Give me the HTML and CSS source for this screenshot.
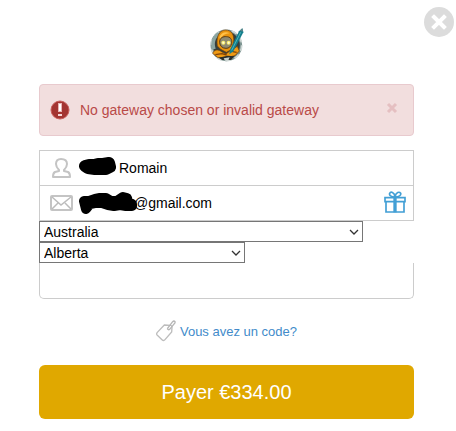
FILE: index.html
```html
<!DOCTYPE html>
<html lang="fr">
    <head>
        <meta charset="utf-8">
        <title>Paiement</title>
        <meta name="viewport" content="width=device-width, initial-scale=1">
        <link rel="stylesheet" href="styles.css">
    </head>

    <body>
        <button type="button" class="close-btn" aria-label="Fermer">
            <svg width="30" height="30" viewBox="0 0 30 30">
                <circle cx="15" cy="15" r="15" fill="#dcdcdc"/>
                <path d="M10 10L20 20M20 10L10 20" stroke="#fff" stroke-width="4" stroke-linecap="square"/>
            </svg>
        </button>

        <main class="checkout">
            <svg class="logo" width="35" height="35" viewBox="39 33 105 105">
                <circle cx="91" cy="88" r="44" fill="#34403f" stroke="#7d9491" stroke-width="7"/>
                <circle cx="91" cy="88" r="46" fill="none" stroke="#d0d8d6" stroke-width="5" stroke-dasharray="17 12"/>
                <path d="M47 101C43 76 51 58 65 49L70 58C57 68 54 82 59 98Z" fill="#8ba5a1"/>
                <path d="M64 90C60 65 68 43 88 42C107 42 115 57 113 77L108 100L91 109L74 100Z" fill="#e8930e" stroke="#6b3d0a" stroke-width="2"/>
                <path d="M70 64C74 50 90 45 101 52C88 53 79 57 75 69Z" fill="#ffc14a"/>
                <path d="M71 80C70 65 82 61 91 62C103 62 109 70 107 82C105 92 99 97 90 97C79 97 72 90 71 80Z" fill="#8f8a70" stroke="#5c3c12" stroke-width="3"/>
                <circle cx="82" cy="80" r="6" fill="#f7ec6a"/>
                <circle cx="98" cy="80" r="6" fill="#f7ec6a"/>
                <circle cx="82" cy="80" r="3" fill="#fffde0"/>
                <circle cx="98" cy="80" r="3" fill="#fffde0"/>
                <path d="M50 112C55 99 68 99 78 108L90 114L103 104L124 91L130 105L117 119L95 124L66 125Z" fill="#ef9a14" stroke="#6b3d0a" stroke-width="2"/>
                <path d="M58 116L78 113L92 117M110 107L122 109" fill="none" stroke="#824309" stroke-width="4"/>
                <path d="M68 125L94 119L115 121L105 132L79 132Z" fill="#2a2e2b"/>
                <path d="M83 127L101 124L97 133L86 133Z" fill="#c6cfcc"/>
                <path d="M139 37L142 49L112 106L100 115L102 101L129 46Z" fill="#147f8d"/>
                <path d="M134 49L107 103" stroke="#4fb5bb" stroke-width="3"/>
                <path d="M139 37L142 47L131 44Z" fill="#5c8588"/>
            </svg>

            <div class="alert" role="alert">
                <svg class="alert-icon" width="20" height="20" viewBox="0 0 20 20">
                    <circle cx="10" cy="10" r="9" fill="#a43532" stroke="#c9605d"/>
                    <path d="M8 3H12V12H8Z" fill="#e9b4b4"/>
                    <path d="M9 4H11V11H9Z" fill="#fff"/>
                    <path d="M8 14H12V16H8Z" fill="#f6d7d7"/>
                </svg>
                <span class="alert-text">No gateway chosen or invalid gateway</span>
                <button type="button" class="alert-close" aria-label="Masquer le message">
                    <svg width="12" height="12" viewBox="0 0 12 12">
                        <path d="M2 2L10 10M10 2L2 10" stroke="#e5bfc1" stroke-width="3"/>
                    </svg>
                </button>
            </div>

            <form class="payment-form">
                <div class="field">
                    <label class="field-icon" for="name" aria-label="Nom">
                        <svg width="24" height="22" viewBox="0 0 24 22">
                            <path d="M9 13C7 11 6 9 6 7C6 3 8 2 11 2C15 2 17 3 17 7C17 9 16 11 14 13V14L18 15C20 16 20 18 20 20H3C3 18 3 16 5 15L9 14Z" fill="none" stroke="#c4c4c4" stroke-width="2" stroke-linejoin="round"/>
                        </svg>
                    </label>
                    <svg class="mask" width="38" height="24" viewBox="0 0 38 24">
                        <path d="M7 10L11 9L16 9L20 8L25 8L31 7L32 11L28 13L22 13L17 13L10 12Z" fill="#000" stroke="#000" stroke-width="12" stroke-linejoin="round"/>
                    </svg>
                    <input type="text" id="name" value="Romain">
                </div>
                <div class="field">
                    <label class="field-icon" for="email" aria-label="E-mail">
                        <svg width="24" height="22" viewBox="0 0 24 22">
                            <rect x="1" y="4" width="21" height="14" rx="1" fill="none" stroke="#c4c4c4" stroke-width="2"/>
                            <path d="M2 5L11 13L21 5M2 17L8 11M21 17L15 11" fill="none" stroke="#bcbcbc" stroke-width="1.5"/>
                        </svg>
                    </label>
                    <svg class="mask mask-email" width="60" height="24" viewBox="0 0 60 24">
                        <path d="M6 10L11 10L17 8L22 7L28 7L33 10L39 10L45 6L49 7L50 11L54 13L54 15L48 15L42 14L36 15L30 14L24 12L17 12L12 13L8 18Z" fill="#000" stroke="#000" stroke-width="10" stroke-linejoin="round"/>
                    </svg>
                    <input type="text" id="email" value="@gmail.com">
                    <svg class="gift" width="22" height="22" viewBox="0 0 66 66">
                        <path d="M3 20H63V32H3ZM6 32H60V63H6Z" fill="#fff" stroke="#429fd5" stroke-width="5"/>
                        <path d="M33 18C21 18 15 13 17 7C20 1 31 3 33 18C36 3 46 1 50 7C52 13 45 18 33 18Z" fill="#fff" stroke="#429fd5" stroke-width="5"/>
                        <path d="M28 18H38V64H28Z" fill="#429fd5"/>
                    </svg>
                </div>

                <div class="select-box country">
                    <select aria-label="Pays">
                        <option>Australia</option>
                    </select>
                    <svg class="chevron" width="10" height="6" viewBox="0 0 10 6">
                        <path d="M1 1L5 5L9 1" fill="none" stroke="#333" stroke-width="1.3"/>
                    </svg>
                </div>
                <div class="select-box state">
                    <select aria-label="Région">
                        <option>Alberta</option>
                    </select>
                    <svg class="chevron" width="10" height="6" viewBox="0 0 10 6">
                        <path d="M1 1L5 5L9 1" fill="none" stroke="#333" stroke-width="1.3"/>
                    </svg>
                </div>
                <div class="card-area"></div>

                <a class="code-link" href="#">
                    <svg width="20" height="22" viewBox="0 0 60 66">
                        <path d="M25 15L44 16Q48 16 48 22L47 36L27 59Q23 64 18 59L4 46Q0 42 4 37Z" fill="none" stroke="#bdbdbd" stroke-width="4"/>
                        <path d="M34 26L50 5Q54 1 57 5Q58 8 55 11L41 28Q37 31 34 26" fill="none" stroke="#b5b5b5" stroke-width="4"/>
                    </svg>
                    <span>Vous avez un code?</span>
                </a>

                <button type="submit" class="pay-btn">Payer €334.00</button>
            </form>
        </main>
    </body>
</html>
```
FILE: styles.css
```css
body {
    margin: 0;
    background-color: #fff;
    color: #000;
    font-family: "Liberation Sans", Arial, sans-serif;
    font-size: 14px;
}

svg {
    display: block;
    flex: none;
}

button {
    padding: 0;
    border: none;
    background: none;
    font-family: inherit;
    cursor: pointer;
}

.close-btn {
    position: absolute;
    top: 7px;
    right: 2px;
}

.checkout {
    padding: 27px 42px 12px 39px;
}

.logo {
    margin: 0 auto 22px;
}

/* error message */
.alert {
    display: flex;
    align-items: center;
    box-sizing: border-box;
    min-height: 52px;
    padding: 0 15px 0 10px;
    border: 1px solid #e8cace;
    border-radius: 4px;
    background-color: #f2dede;
    color: #b94a48;
}

.alert-icon {
    margin-right: 10px;
}

.alert-text {
    flex: 1;
}

.alert-close {
    margin-bottom: 4px;
}

.payment-form {
    margin-top: 14px;
}

/* name and e-mail */
.field {
    display: flex;
    align-items: center;
    height: 34px;
    padding: 0 7px 0 10px;
    border: 1px solid #ccc;
}

.field + .field {
    border-top: none;
}

.field-icon {
    margin-right: 4px;
}

.mask {
    margin-right: 3px;
}

.mask-email {
    margin-right: -4px;
}

.field input {
    flex: 1;
    min-width: 0;
    padding: 0;
    border: none;
    outline: none;
    background: none;
    color: inherit;
    font: inherit;
}

.gift {
    margin-bottom: 2px;
}

/* drop-downs */
.select-box {
    display: grid;
    align-items: center;
    max-width: 100%;
}

.country {
    width: 324px;
}

.state {
    width: 206px;
}

.select-box select,
.chevron {
    grid-area: 1 / 1;
}

.select-box select {
    appearance: none;
    width: 100%;
    height: 21px;
    padding: 0 20px 0 4px;
    border: 1px solid #767676;
    border-radius: 0;
    background-color: #fff;
    color: inherit;
    font: inherit;
}

.chevron {
    justify-self: end;
    margin-right: 4px;
    pointer-events: none;
}

.card-area {
    height: 35px;
    border: 1px solid #ccc;
    border-top: none;
    border-radius: 0 0 5px 5px;
}

.code-link {
    display: flex;
    align-items: center;
    justify-content: center;
    gap: 4px;
    margin: 21px 0 23px;
    color: #428bca;
    font-size: 13px;
    text-decoration: none;
}

.pay-btn {
    width: 100%;
    height: 54px;
    border-radius: 6px;
    background-color: #e0a800;
    color: #fff;
    font-size: 20px;
}
```
